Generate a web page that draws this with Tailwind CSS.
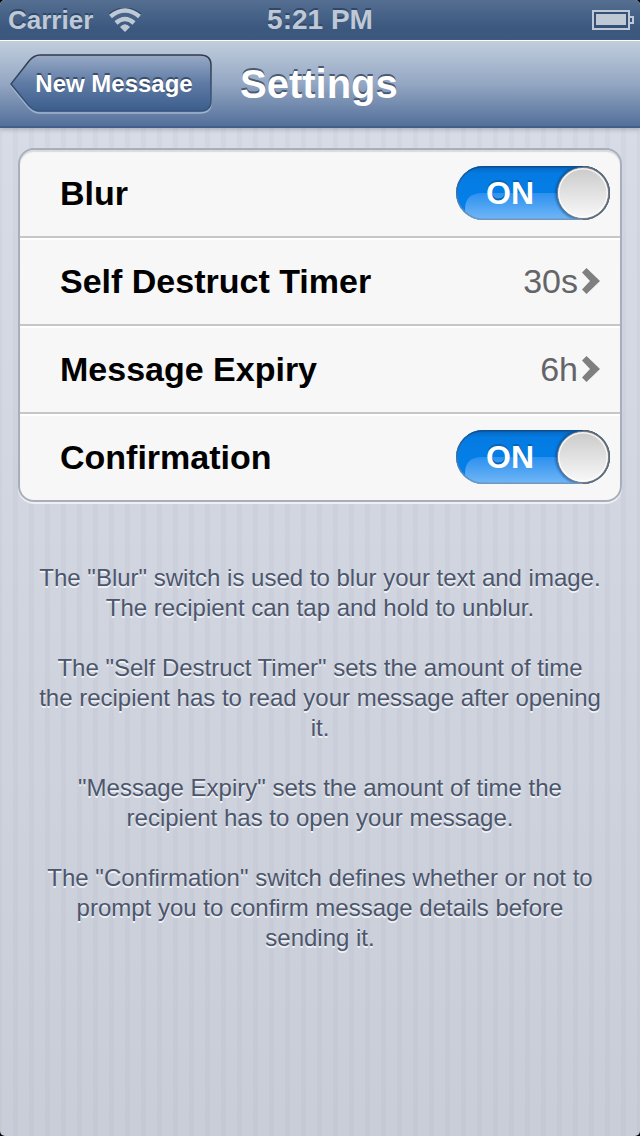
<!DOCTYPE html>
<html lang="en">
<head>
<meta charset="utf-8">
<meta name="viewport" content="width=device-width, initial-scale=1">
<title>Settings</title>
<script src="https://cdn.jsdelivr.net/npm/@tailwindcss/browser@4"></script>
</head>
<body class="bg-black font-['Liberation_Sans',Arial,sans-serif]">
<!-- gradients shared by both switches -->
<svg class="absolute size-0" aria-hidden="true">
  <defs>
    <linearGradient id="track" x1="0" y1="0" x2="0" y2="1"><stop offset="0" stop-color="#0763b8"/><stop offset=".14" stop-color="#047be2"/><stop offset="1" stop-color="#0482ee"/></linearGradient>
    <linearGradient id="gloss" x1="0" y1="0" x2="0" y2="1"><stop offset="0" stop-color="#2c90ef"/><stop offset="1" stop-color="#72b7f6"/></linearGradient>
    <linearGradient id="knob" x1="0" y1="0" x2="0" y2="1"><stop offset="0" stop-color="#cacaca"/><stop offset="1" stop-color="#f9f9f9"/></linearGradient>
    <linearGradient id="edge" x1="0" y1="0" x2="0" y2="1"><stop offset="0" stop-color="#0a4f93"/><stop offset="1" stop-color="#7297bf"/></linearGradient>
    <clipPath id="pill"><rect width="154" height="54" rx="27"/></clipPath>
    <symbol id="switch" viewBox="0 0 154 54">
      <g clip-path="url(#pill)">
        <rect width="154" height="54" fill="url(#track)"/>
        <path d="M9 54V43Q9 27 27 27H154V54Z" fill="url(#gloss)"/>
        <circle cx="127" cy="27" r="29" fill="#083f7a" opacity=".15"/>
        <circle cx="127" cy="27" r="27.500" fill="#083f7a" opacity=".3"/>
      </g>
      <rect x=".75" y=".75" width="152.500" height="52.500" rx="26.250" fill="none" stroke="url(#edge)" stroke-width="1.500"/>
      <path d="M127 .75A26.250 26.250 0 0 1 127 53.250" fill="none" stroke="#66676a" stroke-width="1.500"/>
      <circle cx="127" cy="27" r="25.500" fill="url(#knob)" stroke="#77797c" stroke-width="1"/>
      <circle cx="127" cy="27" r="24.250" fill="none" stroke="#fff" stroke-width="1.500" opacity=".75"/>
    </symbol>
  </defs>
</svg>
<div class="flex min-h-screen flex-col overflow-hidden rounded-[5px] bg-[repeating-linear-gradient(90deg,transparent_0px,transparent_11px,#9aa5be1a_11px,#9aa5be1a_16px),linear-gradient(#d9dde7,#c9cdd7)] bg-[position:2px_0px,0px_0px]">
  <div class="grid h-10 grid-cols-3 items-center bg-linear-to-b from-[#546f91] to-[#3c587f] to-70% px-2 text-[26px] font-bold text-[#bfc9d6] [text-shadow:0_-2px_0_#2f4869]">
    <div class="flex items-center gap-4">
      <span>Carrier</span>
      <svg class="h-6 w-8" viewBox="0 0 32 24" fill="none" stroke="#bfc9d6" stroke-width="4.500" role="img" aria-label="Wi-Fi">
        <path d="M1 7Q16-4 31 7" stroke="#2f4869"/>
        <path d="M1.500 8.500Q16-3.500 30.500 8.500M7 15Q16 7 25 15"/>
        <path d="M11 19Q16 13.500 21 19L16 24Z" fill="#bfc9d6" stroke="none"/>
      </svg>
    </div>
    <span class="text-center text-[28px] leading-10">5:21 PM</span>
    <svg class="-mr-0.5 h-5 w-[42px] justify-self-end" viewBox="0 0 42 20" role="img" aria-label="Battery full">
      <path d="M1 1H37V6H41V14H37V19H1Z" fill="#34517a"/>
      <path d="M1 1H37V19H1ZM37 7H41V13H37" fill="none" stroke="#bfc9d6" stroke-width="2"/>
      <path d="M4 4H34V15H4Z" fill="#bfc9d6"/>
    </svg>
  </div>
  <header class="z-10 flex h-[88px] items-center gap-7 border-t border-b-2 border-t-white border-b-[#415f88] bg-linear-to-b from-[#c1cedd] via-[#94a7c3] to-[#54709a] pl-2.5 shadow-[0_2px_4px_#6b768866]">
    <button type="button" class="relative h-[60px] w-[202px] pl-1.5 text-2xl font-bold text-white [text-shadow:0_-2px_0_#3a4d6a]">
      <svg class="absolute inset-0 size-full" viewBox="0 0 202 60" aria-hidden="true">
        <defs><linearGradient id="back" x1="0" y1="0" x2="0" y2="1"><stop offset="0" stop-color="#98aac6"/><stop offset=".5" stop-color="#5f7ba5"/><stop offset="1" stop-color="#3c5d8c"/></linearGradient>
        <linearGradient id="rim" x1="0" y1="0" x2="0" y2="1"><stop offset="0" stop-color="#313a48"/><stop offset="1" stop-color="#3a5781"/></linearGradient></defs>
        <path d="M1 32L19 8Q24 3 30 3H190Q201 3 201 13V49Q201 59 190 59H30Q24 59 19 54Z" fill="none" stroke="#a0b4ce" stroke-width="1.500"/>
        <path d="M1 30L19 7Q24 1 30 1H190Q201 1 201 11V47Q201 57 190 57H30Q24 57 19 52Z" fill="url(#back)" stroke="url(#rim)" stroke-width="1.500"/>
      </svg>
      <span class="relative">New Message</span>
    </button>
    <h1 class="text-[40px] font-bold text-white [text-shadow:0_-2px_0_#4a5a73]">Settings</h1>
  </header>
  <main class="px-[18px] pt-5">
    <div class="divide-y-2 divide-[#c6c6c8] rounded-2xl border-2 border-[#a9afba] bg-[#f7f7f7] text-[34px] font-bold text-black shadow-[0_2px_0_#eef0f4,inset_0_2px_1px_#d9dadd]">
      <label class="flex h-[88px] items-center justify-between pr-2.5 pl-10">
        <span>Blur</span>
        <span class="relative flex h-[54px] w-[154px] items-center pl-[30px]">
          <input type="checkbox" checked class="absolute inset-0 size-full appearance-none rounded-full">
          <svg class="pointer-events-none absolute inset-0 size-full" aria-hidden="true"><use href="#switch"/></svg>
          <span class="relative text-[32px] text-white [text-shadow:0_-2px_0_#0865b5]">ON</span>
        </span>
      </label>
      <button type="button" class="flex h-[88px] w-full items-center justify-between pr-5 pl-10 shadow-[inset_0_2px_0_#fff]">
        <span>Self Destruct Timer</span>
        <span class="flex items-center gap-1 font-normal text-[#646569]">30s
          <svg class="h-[26px] w-[18px]" viewBox="0 0 18 26" fill="#7f7f7f" aria-hidden="true"><path d="M4.500 0L18 13L4.500 26L0 21.500L8 13L0 4.500Z"/></svg>
        </span>
      </button>
      <button type="button" class="flex h-[88px] w-full items-center justify-between pr-5 pl-10 shadow-[inset_0_2px_0_#fff]">
        <span>Message Expiry</span>
        <span class="flex items-center gap-1 font-normal text-[#646569]">6h
          <svg class="h-[26px] w-[18px]" viewBox="0 0 18 26" fill="#7f7f7f" aria-hidden="true"><path d="M4.500 0L18 13L4.500 26L0 21.500L8 13L0 4.500Z"/></svg>
        </span>
      </button>
      <label class="flex h-[86px] items-center justify-between rounded-b-2xl pr-2.5 pl-10 shadow-[inset_0_2px_0_#fff]">
        <span>Confirmation</span>
        <span class="relative flex h-[54px] w-[154px] items-center pl-[30px]">
          <input type="checkbox" checked class="absolute inset-0 size-full appearance-none rounded-full">
          <svg class="pointer-events-none absolute inset-0 size-full" aria-hidden="true"><use href="#switch"/></svg>
          <span class="relative text-[32px] text-white [text-shadow:0_-2px_0_#0865b5]">ON</span>
        </span>
      </label>
    </div>
    <div class="flex flex-col gap-[30px] px-3 pt-[61px] text-center text-2xl leading-[30px] text-[#4c566c] [text-shadow:0_2px_0_#f0f2f6]">
      <p>The "Blur" switch is used to blur your text and image.<br>The recipient can tap and hold to unblur.</p>
      <p>The "Self Destruct Timer" sets the amount of time<br>the recipient has to read your message after opening<br>it.</p>
      <p>"Message Expiry" sets the amount of time the<br>recipient has to open your message.</p>
      <p>The "Confirmation" switch defines whether or not to<br>prompt you to confirm message details before<br>sending it.</p>
    </div>
  </main>
</div>
</body>
</html>
